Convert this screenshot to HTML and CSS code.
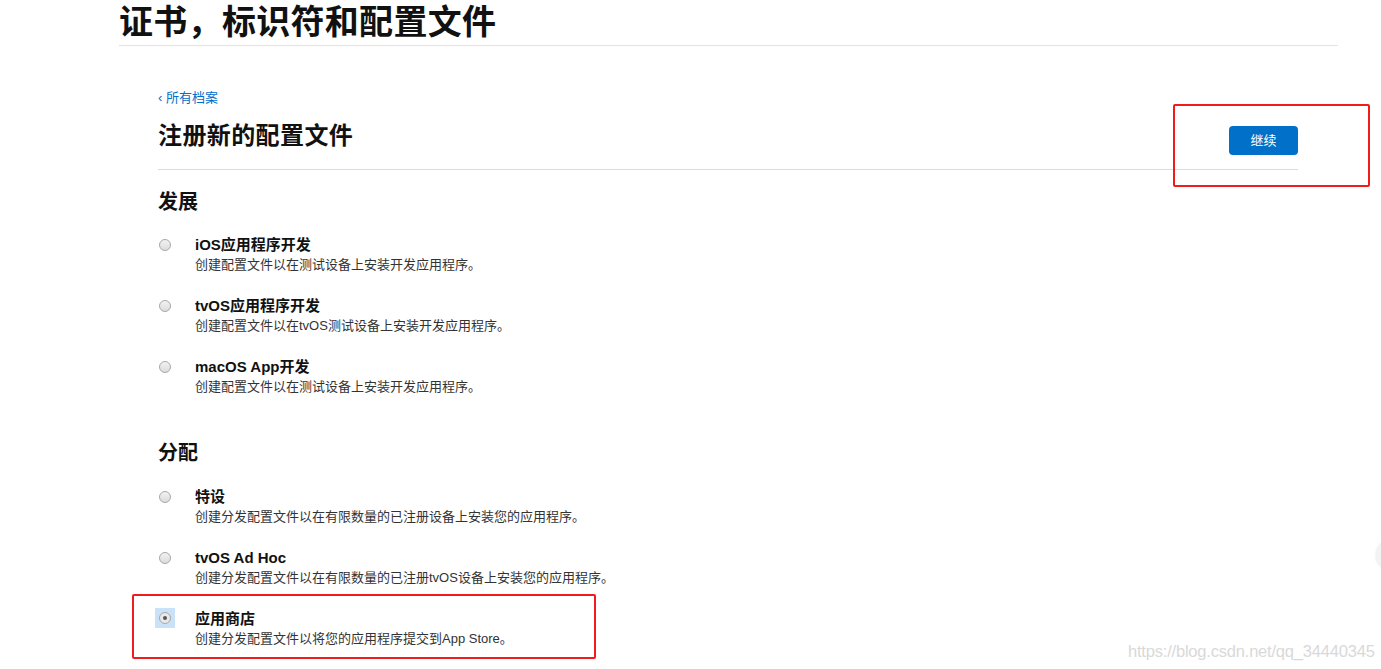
FILE: index.html
```html
<!DOCTYPE html>
<html lang="zh-CN">
<head>
<meta charset="utf-8">
<title>证书，标识符和配置文件</title>
<link rel="stylesheet" href="styles.css">
</head>
<body>
<header class="page-header">
  <h1 class="page-title">证书，标识符和配置文件</h1>
</header>
<main class="main">
  <a class="back-link" href="#"><span class="chev">‹</span> 所有档案</a>
  <div class="head-row">
    <h2 class="head-title">注册新的配置文件</h2>
    <button class="btn-continue" type="button">继续</button>
  </div>

  <section class="group">
    <h3 class="group-title">发展</h3>
    <div class="options">
      <div class="option">
        <span class="radio"></span>
        <div class="opt-text">
          <div class="opt-title">iOS应用程序开发</div>
          <div class="opt-desc">创建配置文件以在测试设备上安装开发应用程序。</div>
        </div>
      </div>
      <div class="option">
        <span class="radio"></span>
        <div class="opt-text">
          <div class="opt-title">tvOS应用程序开发</div>
          <div class="opt-desc">创建配置文件以在tvOS测试设备上安装开发应用程序。</div>
        </div>
      </div>
      <div class="option">
        <span class="radio"></span>
        <div class="opt-text">
          <div class="opt-title">macOS App开发</div>
          <div class="opt-desc">创建配置文件以在测试设备上安装开发应用程序。</div>
        </div>
      </div>
    </div>
  </section>

  <section class="group group-second">
    <h3 class="group-title">分配</h3>
    <div class="options">
      <div class="option">
        <span class="radio"></span>
        <div class="opt-text">
          <div class="opt-title">特设</div>
          <div class="opt-desc">创建分发配置文件以在有限数量的已注册设备上安装您的应用程序。</div>
        </div>
      </div>
      <div class="option">
        <span class="radio"></span>
        <div class="opt-text">
          <div class="opt-title">tvOS Ad Hoc</div>
          <div class="opt-desc">创建分发配置文件以在有限数量的已注册tvOS设备上安装您的应用程序。</div>
        </div>
      </div>
      <div class="option">
        <span class="radio-wrap"><span class="radio radio-on"></span></span>
        <div class="opt-text">
          <div class="opt-title">应用商店</div>
          <div class="opt-desc">创建分发配置文件以将您的应用程序提交到App Store。</div>
        </div>
      </div>
    </div>
  </section>
</main>

<div class="mark mark-btn"></div>
<div class="mark mark-opt"></div>
<div class="edge-circle"></div>
<div class="watermark">https://blog.csdn.net/qq_34440345</div>
</body>
</html>
```

FILE: styles.css
```css
html, body {
  margin: 0;
  padding: 0;
  background: #fff;
}
body {
  font-family: "Liberation Sans", "Noto Sans CJK SC", sans-serif;
  color: #111;
  width: 1381px;
  height: 669px;
  overflow: hidden;
  position: relative;
}
.page-header {
  margin-left: 119px;
  width: 1219px;
  border-bottom: 1px solid #e3e3e3;
}
.page-title {
  margin: 0;
  font-size: 34px;
  line-height: 45px;
  font-weight: 700;
  color: #111;
  letter-spacing: 0.3px;
}
.main {
  margin-left: 158px;
  width: 1140px;
}
.back-link {
  display: block;
  margin-top: 43px;
  font-size: 13px;
  line-height: 18px;
  color: #0070c9;
  text-decoration: none;
}
.chev {
  font-size: 13px;
}
.head-row {
  display: flex;
  justify-content: space-between;
  align-items: flex-start;
  margin-top: 13px;
  padding-bottom: 14px;
  border-bottom: 1px solid #dcdcdc;
}
.head-title {
  margin: 0;
  font-size: 24px;
  line-height: 32px;
  font-weight: 700;
  color: #111;
  letter-spacing: 0.4px;
}
.btn-continue {
  margin-top: 6px;
  width: 69px;
  height: 29px;
  border: none;
  border-radius: 4px;
  background: #0070c9;
  color: #fff;
  font-family: "Liberation Sans", "Noto Sans CJK SC", sans-serif;
  font-size: 13px;
  line-height: 29px;
  padding: 0;
}
.group-title {
  margin: 18px 0 0;
  font-size: 20px;
  line-height: 28px;
  font-weight: 700;
  color: #111;
}
.group-second .group-title {
  margin-top: 42px;
}
.options {
  display: flex;
  flex-direction: column;
  gap: 21px;
  margin-top: 19px;
}
.group-second .options {
  margin-top: 20px;
}
.option {
  display: flex;
  align-items: flex-start;
}
.radio {
  display: block;
  width: 10px;
  height: 10px;
  margin: 4px 24px 0 1px;
  border-radius: 50%;
  border: 1px solid #a8a8a8;
  background: linear-gradient(#f2f2f2, #dcdcdc);
  box-sizing: content-box;
  flex: none;
}
.radio-wrap {
  flex: none;
  width: 20px;
  height: 20px;
  margin: -1px 20px 0 -3px;
  background: #c9e2f8;
  display: flex;
  align-items: center;
  justify-content: center;
}
.radio-wrap .radio {
  margin: 0;
  position: relative;
  background: #e9e9e9;
}
.radio-on::after {
  content: "";
  position: absolute;
  left: 3px;
  top: 3px;
  width: 4px;
  height: 4px;
  border-radius: 50%;
  background: #555;
}
.opt-title {
  font-size: 15px;
  line-height: 20px;
  font-weight: 700;
  color: #111;
}
.opt-desc {
  font-size: 13px;
  line-height: 20px;
  color: #333;
}
.mark {
  position: absolute;
  border: 2px solid #ee1c1c;
  border-radius: 2px;
  box-sizing: border-box;
}
.mark-btn {
  left: 1173px;
  top: 104px;
  width: 197px;
  height: 83px;
}
.mark-opt {
  left: 132px;
  top: 594px;
  width: 464px;
  height: 65px;
}
.edge-circle {
  position: absolute;
  left: 1376px;
  top: 540px;
  width: 30px;
  height: 30px;
  border-radius: 50%;
  background: #f3f3f3;
  box-shadow: 0 0 3px rgba(0,0,0,0.12);
}
.watermark {
  position: absolute;
  left: 1128px;
  top: 642px;
  font-family: "Liberation Sans", sans-serif;
  font-size: 16.5px;
  line-height: 18px;
  color: #d9d9d9;
  letter-spacing: -0.2px;
}
```
